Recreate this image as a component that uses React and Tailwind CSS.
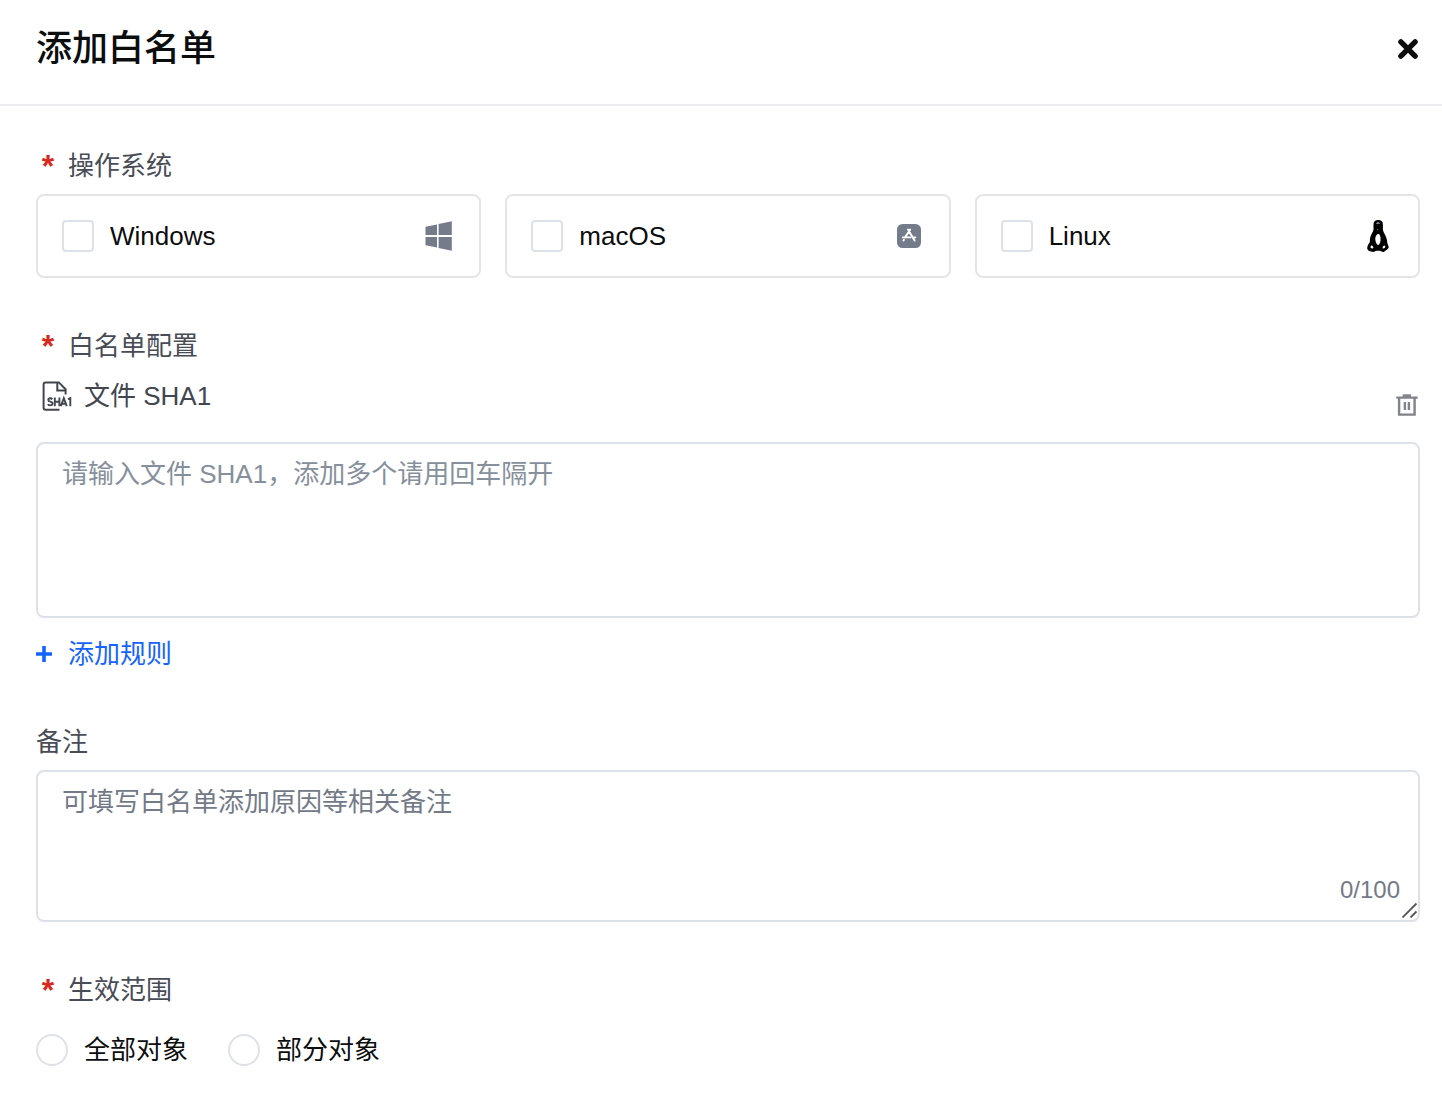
import { useState } from 'react';

function CloseIcon() {
    return (
        <svg className="h-6 w-6" viewBox="0 0 24 24" fill="none" stroke="currentColor" strokeWidth="5.4" strokeLinecap="round" aria-hidden="true">
            <path d="M4.9 4.9 19.1 19.1M19.1 4.9 4.9 19.1" />
        </svg>
    );
}

function WindowsIcon() {
    return (
        <svg className="h-8 w-8 text-[#747b8a]" viewBox="0 0 32 32" fill="currentColor" aria-hidden="true">
            <path d="M2.5 6.8 14 4.4V15H2.5zM15.6 4 28.8 1.2V15H15.6zM2.5 17H14V27.6L2.5 25.2zM15.6 17H28.8V30.8L15.6 28z" />
        </svg>
    );
}

function MacIcon() {
    return (
        <svg className="h-8 w-8" viewBox="0 0 32 32" fill="none" aria-hidden="true">
            <rect x="4" y="4" width="24" height="24" rx="5.5" fill="#747b8a" />
            <g stroke="#fff" strokeWidth="1.9" strokeLinecap="round">
                <path d="M17.2 9.6 12 17.4M14.9 9.6 21.6 20.6M9.8 17.4H17.4M20.4 17.4H22.4M10.9 19.8 10.5 20.5" />
            </g>
        </svg>
    );
}

function LinuxIcon() {
    return (
        <svg className="h-8 w-8" viewBox="0 0 32 32" aria-hidden="true">
            <path
                d="M16.2 0C13 0 11.5 1.8 11.5 4.4V9.4C11.3 12 8.4 14.7 8 18.5L7.8 22.3C6.6 24 5.2 26 5.2 28.2C5.2 30.6 8.6 31.6 11 31.9C12.2 32 13.2 31.2 14.2 30.8H18.2C19.4 31.6 20.6 32.3 22.2 31.8C23.4 30.6 26.8 29.2 26.7 27.2C26.5 25.4 25.4 24 25.2 22C25.2 16.5 21.2 13 20.9 9.4V4.4C20.9 1.8 19.4 0 16.2 0Z"
                fill="#000"
            />
            <path d="M16.2 13.8C14.2 14.6 12.9 17.2 13.3 20C13.7 22.2 14.8 25 16 25C17.4 25 18.4 22.2 18.6 20C18.8 17.2 18 14.4 16.2 13.8Z" fill="#fff" />
            <path d="M9.6 25.2C8.6 26 8.2 27.2 8.7 27.8C9.6 28.4 10.8 28.7 11.4 28.1C11.7 27.3 10.6 25.8 9.6 25.2ZM22.2 25.6C21 26.2 20.3 27.6 20.8 28.4C21.6 28.8 23 27.8 23.4 27C23.4 26.3 22.8 25.7 22.2 25.6Z" fill="#fff" />
            <path d="M14.6 3.8C15.4 2.9 16.8 2.9 17.6 3.6" stroke="#a3a8c0" strokeWidth="1.2" fill="none" />
            <circle cx="15.6" cy="9.6" r=".7" fill="#777" />
        </svg>
    );
}

function ShaFileIcon() {
    return (
        <svg className="h-8 w-8 shrink-0" viewBox="0 0 32 32" fill="none" stroke="currentColor" aria-hidden="true">
            <path d="M19.5 29.7H5.6Q3.6 29.7 3.6 27.7V4.4Q3.6 2.4 5.6 2.4H18.8L25.6 9.2V14.5" strokeWidth="2" />
            <path d="M17.3 2.6V10.6H25.6" strokeWidth="2" />
            <path
                d="M12.3 19.4Q11.5 18.3 10.2 18.3Q8.3 18.3 8.3 20Q8.3 21.3 10.3 21.6Q12.5 22 12.5 23.6Q12.5 25.4 10.3 25.4Q8.7 25.4 7.8 24.2M14.8 17.6V26.2M19.4 17.6V26.2M14.8 21.8H19.4M20.8 26.2 23.8 18.2 26.8 26.2M21.8 23.8H25.8M28 19.2 30.3 18.2V26.2"
                strokeWidth="1.9"
            />
        </svg>
    );
}

function TrashIcon() {
    return (
        <svg className="h-6 w-6" viewBox="0 0 24 24" fill="none" stroke="currentColor" strokeWidth="2.4" aria-hidden="true">
            <path d="M.3 5.6H21.7M3.1 5.6V22.6H18.6V5.6M8.9 10V18M12.9 10V18" />
            <path d="M6.7 3.6H15" strokeWidth="2.6" />
        </svg>
    );
}

function PlusIcon() {
    return (
        <svg className="h-4 w-4" viewBox="0 0 16 16" fill="none" stroke="currentColor" strokeWidth="3.6" aria-hidden="true">
            <path d="M0 8H16M8 0V16" />
        </svg>
    );
}

const SYSTEMS = [
    { id: 'windows', name: 'Windows', icon: WindowsIcon },
    { id: 'macos', name: 'macOS', icon: MacIcon },
    { id: 'linux', name: 'Linux', icon: LinuxIcon },
];

const SCOPES = [
    { id: 'all', name: '全部对象' },
    { id: 'part', name: '部分对象' },
];

const labelClass = 'flex h-10 items-center text-[#484c56]';
const textareaClass =
    'block w-full resize-none rounded-lg border-2 border-[#dde2e9] bg-white px-6 py-2.5 leading-10 text-[#0c0d0e] outline-none focus:border-[#1664ff]';

function Required() {
    return (
        <span className="mr-2 w-6 text-center font-['Liberation_Sans'] text-[32px] leading-8 font-bold text-[#d9291c]" aria-hidden="true">
            *
        </span>
    );
}

export default function App() {
    const [systems, setSystems] = useState([]);
    const [hashes, setHashes] = useState('');
    const [remark, setRemark] = useState('');
    const [scope, setScope] = useState('');

    const toggleSystem = (id) => {
        setSystems((prev) => (prev.includes(id) ? prev.filter((s) => s !== id) : [...prev, id]));
    };

    return (
        <div className="min-h-screen bg-white font-['Liberation_Sans','Noto_Sans_CJK_SC',sans-serif] text-[26px] leading-10 text-[#0c0d0e]">
            <header className="flex items-center justify-between border-b-2 border-[#ebebf0] pt-[25px] pr-[22px] pb-[31px] pl-9">
                <h1 className="text-4xl leading-12 font-medium">添加白名单</h1>
                <button type="button" aria-label="关闭">
                    <CloseIcon />
                </button>
            </header>

            <form className="flex flex-col gap-12 pt-10 pr-[22px] pb-6 pl-9">
                <fieldset>
                    <legend className={labelClass}>
                        <Required />
                        操作系统
                    </legend>
                    <div className="grid grid-cols-3 gap-6 pt-2">
                        {SYSTEMS.map(({ id, name, icon: Icon }) => (
                            <label key={id} className="flex items-center rounded-lg border-2 border-[#e5e5e5] px-6 py-5">
                                <input
                                    type="checkbox"
                                    className="h-8 w-8 appearance-none rounded border-2 border-[#dde2e9] checked:border-[#1664ff] checked:bg-[#1664ff]"
                                    checked={systems.includes(id)}
                                    onChange={() => toggleSystem(id)}
                                />
                                <span className="ml-4 flex-1">{name}</span>
                                <Icon />
                            </label>
                        ))}
                    </div>
                </fieldset>

                <section>
                    <h2 className={labelClass}>
                        <Required />
                        白名单配置
                    </h2>
                    <div className="mt-2.5 mb-6.5 flex items-end justify-between text-[#41464f]">
                        <label htmlFor="sha1" className="flex items-center gap-3 pl-1">
                            <ShaFileIcon />
                            文件 SHA1
                        </label>
                        <button type="button" className="text-[#80838a]" aria-label="删除">
                            <TrashIcon />
                        </button>
                    </div>
                    <textarea
                        id="sha1"
                        className={`${textareaClass} h-44 placeholder:text-[#86909c]`}
                        placeholder="请输入文件 SHA1，添加多个请用回车隔开"
                        value={hashes}
                        onChange={(e) => setHashes(e.target.value)}
                    />
                    <button type="button" className="mt-4 flex items-center gap-4 text-[#1664ff]">
                        <PlusIcon />
                        添加规则
                    </button>
                </section>

                <section>
                    <label htmlFor="remark" className={labelClass}>
                        备注
                    </label>
                    <div className="relative mt-2">
                        <textarea
                            id="remark"
                            className={`${textareaClass} h-38 placeholder:text-[#737a87]`}
                            maxLength={100}
                            placeholder="可填写白名单添加原因等相关备注"
                            value={remark}
                            onChange={(e) => setRemark(e.target.value)}
                        />
                        <span className="absolute right-5 bottom-3 text-2xl leading-10 text-[#737a87]">{remark.length}/100</span>
                        <svg className="absolute right-0.5 bottom-1 h-4 w-4" viewBox="0 0 16 16" stroke="#555" strokeWidth="1.8" aria-hidden="true">
                            <path d="M.5 15.5 14.5 1.5M8.5 15.5 14.5 9.5" />
                        </svg>
                    </div>
                </section>

                <fieldset>
                    <legend className={labelClass}>
                        <Required />
                        生效范围
                    </legend>
                    <div className="flex gap-10 pt-5">
                        {SCOPES.map(({ id, name }) => (
                            <label key={id} className="flex items-center gap-4">
                                <input
                                    type="radio"
                                    name="scope"
                                    className="h-8 w-8 appearance-none rounded-full border-2 border-[#dde2e9] checked:border-8 checked:border-[#1664ff]"
                                    checked={scope === id}
                                    onChange={() => setScope(id)}
                                />
                                {name}
                            </label>
                        ))}
                    </div>
                </fieldset>
            </form>
        </div>
    );
}
